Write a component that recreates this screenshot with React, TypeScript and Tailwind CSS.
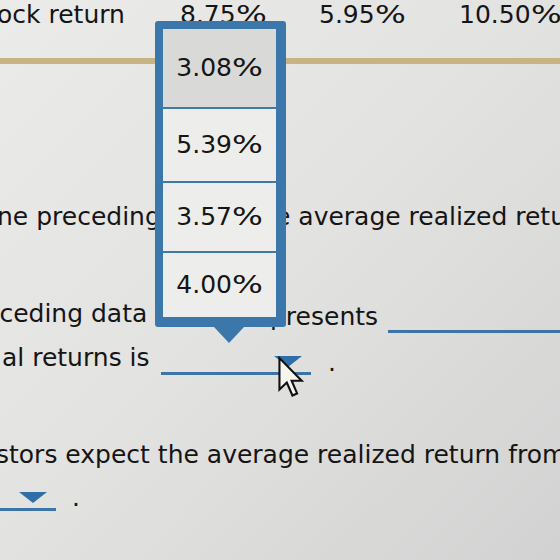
import type { ReactNode } from "react"

const OPTIONS = ["3.08%", "5.39%", "3.57%", "4.00%"]
const ROW_HEIGHTS = ["h-[78px]", "h-[74px]", "h-[70px]", "h-[66px]"]

// Verdana-style wide percent sign
function Pct() {
    return <span className="mr-[7px] inline-block origin-left scale-x-[1.3]">%</span>
}

function Num({ children }: { children: ReactNode }) {
    return (
        <span className="whitespace-nowrap">
            {children}
            <Pct />
        </span>
    )
}

function Caret({ className = "" }: { className?: string }) {
    return (
        <svg width="28" height="11" viewBox="0 0 28 11" className={className}>
            <path d="M0 0 H28 L14 11 Z" fill="#2f6ea6" />
        </svg>
    )
}

function Blank({ width, caret = true }: { width: string; caret?: boolean }) {
    return (
        <span className={`relative inline-block h-[31px] border-b-[3px] border-[#3a74a8] ${width}`}>
            {caret && <Caret className="absolute right-[9px] top-[12px]" />}
        </span>
    )
}

function Cursor() {
    return (
        <svg width="28" height="42" viewBox="0 0 13 20" className="absolute left-[277px] top-[356px] z-20">
            <path
                d="M1 1 L1 16 L4.5 12.6 L7.2 18.8 L9.4 17.8 L6.8 11.8 L11.6 11.8 Z"
                fill="#f7f5ee"
                stroke="#111"
                strokeWidth="1"
                strokeLinejoin="miter"
            />
        </svg>
    )
}

export default function App() {
    return (
        <div className="relative h-[560px] w-[560px] overflow-hidden bg-linear-to-br from-[#ebebe9] via-[#e2e2e0] to-[#d2d2d2] font-['DejaVu_Sans',sans-serif] text-[25px] leading-[28px] text-[#151515]">
            {/* table row */}
            <div className="mt-[1px] grid h-[28px] grid-cols-[180px_139px_140px_1fr] whitespace-nowrap">
                <span className="-ml-[3px]">ock return</span>
                <Num>8.75</Num>
                <Num>5.95</Num>
                <Num>10.50</Num>
            </div>
            <div className="mt-[29px] h-[6px] bg-[#c8b383]" />

            <div className="mt-[139px] grid h-[28px] grid-cols-[275px_1fr] whitespace-nowrap">
                <span className="-ml-[3px]">ne preceding</span>
                <span>e average realized return</span>
            </div>

            <div className="mt-[69px] flex h-[28px] items-start whitespace-nowrap">
                <span className="-ml-[16px] w-[286px]">eceding data</span>
                <span className="translate-y-[3px]">presents</span>
                <span className="ml-[10px] flex-1 translate-y-[2px]">
                    <Blank width="w-full" caret={false} />
                </span>
            </div>

            <div className="mt-[16px] flex h-[28px] items-start whitespace-nowrap">
                <span className="ml-[2px] w-[159px]">al returns is</span>
                <Blank width="w-[150px]" />
                <span className="ml-[17px] translate-y-[5px]">.</span>
            </div>

            <div className="mt-[69px] h-[28px] whitespace-nowrap">
                <span className="-ml-[4px] inline-block">stors expect the average realized return from</span>
            </div>

            <div className="mt-[11px] flex h-[28px] items-start whitespace-nowrap">
                <Blank width="w-[56px]" />
                <span className="ml-[16px] translate-y-[4px]">.</span>
            </div>

            {/* open select menu */}
            <div className="absolute left-[155px] top-[21px] z-10 w-[131px] rounded-[3px] border-[8px] border-r-[10px] border-b-[10px] border-[#3b77ab] bg-[#ededec]">
                {OPTIONS.map((opt, i) => (
                    <div
                        key={opt}
                        className={`flex items-center justify-center ${ROW_HEIGHTS[i]} ${i > 0 ? "border-t-2 border-[#3f79ac]" : "bg-[#d9d9d8]"}`}
                    >
                        <Num>{opt.replace("%", "")}</Num>
                    </div>
                ))}
                <svg width="30" height="16" viewBox="0 0 30 16" className="absolute left-[51px] -bottom-[26px]">
                    <path d="M0 0 H30 L15 16 Z" fill="#3b77ab" />
                </svg>
            </div>

            <Cursor />
        </div>
    )
}
